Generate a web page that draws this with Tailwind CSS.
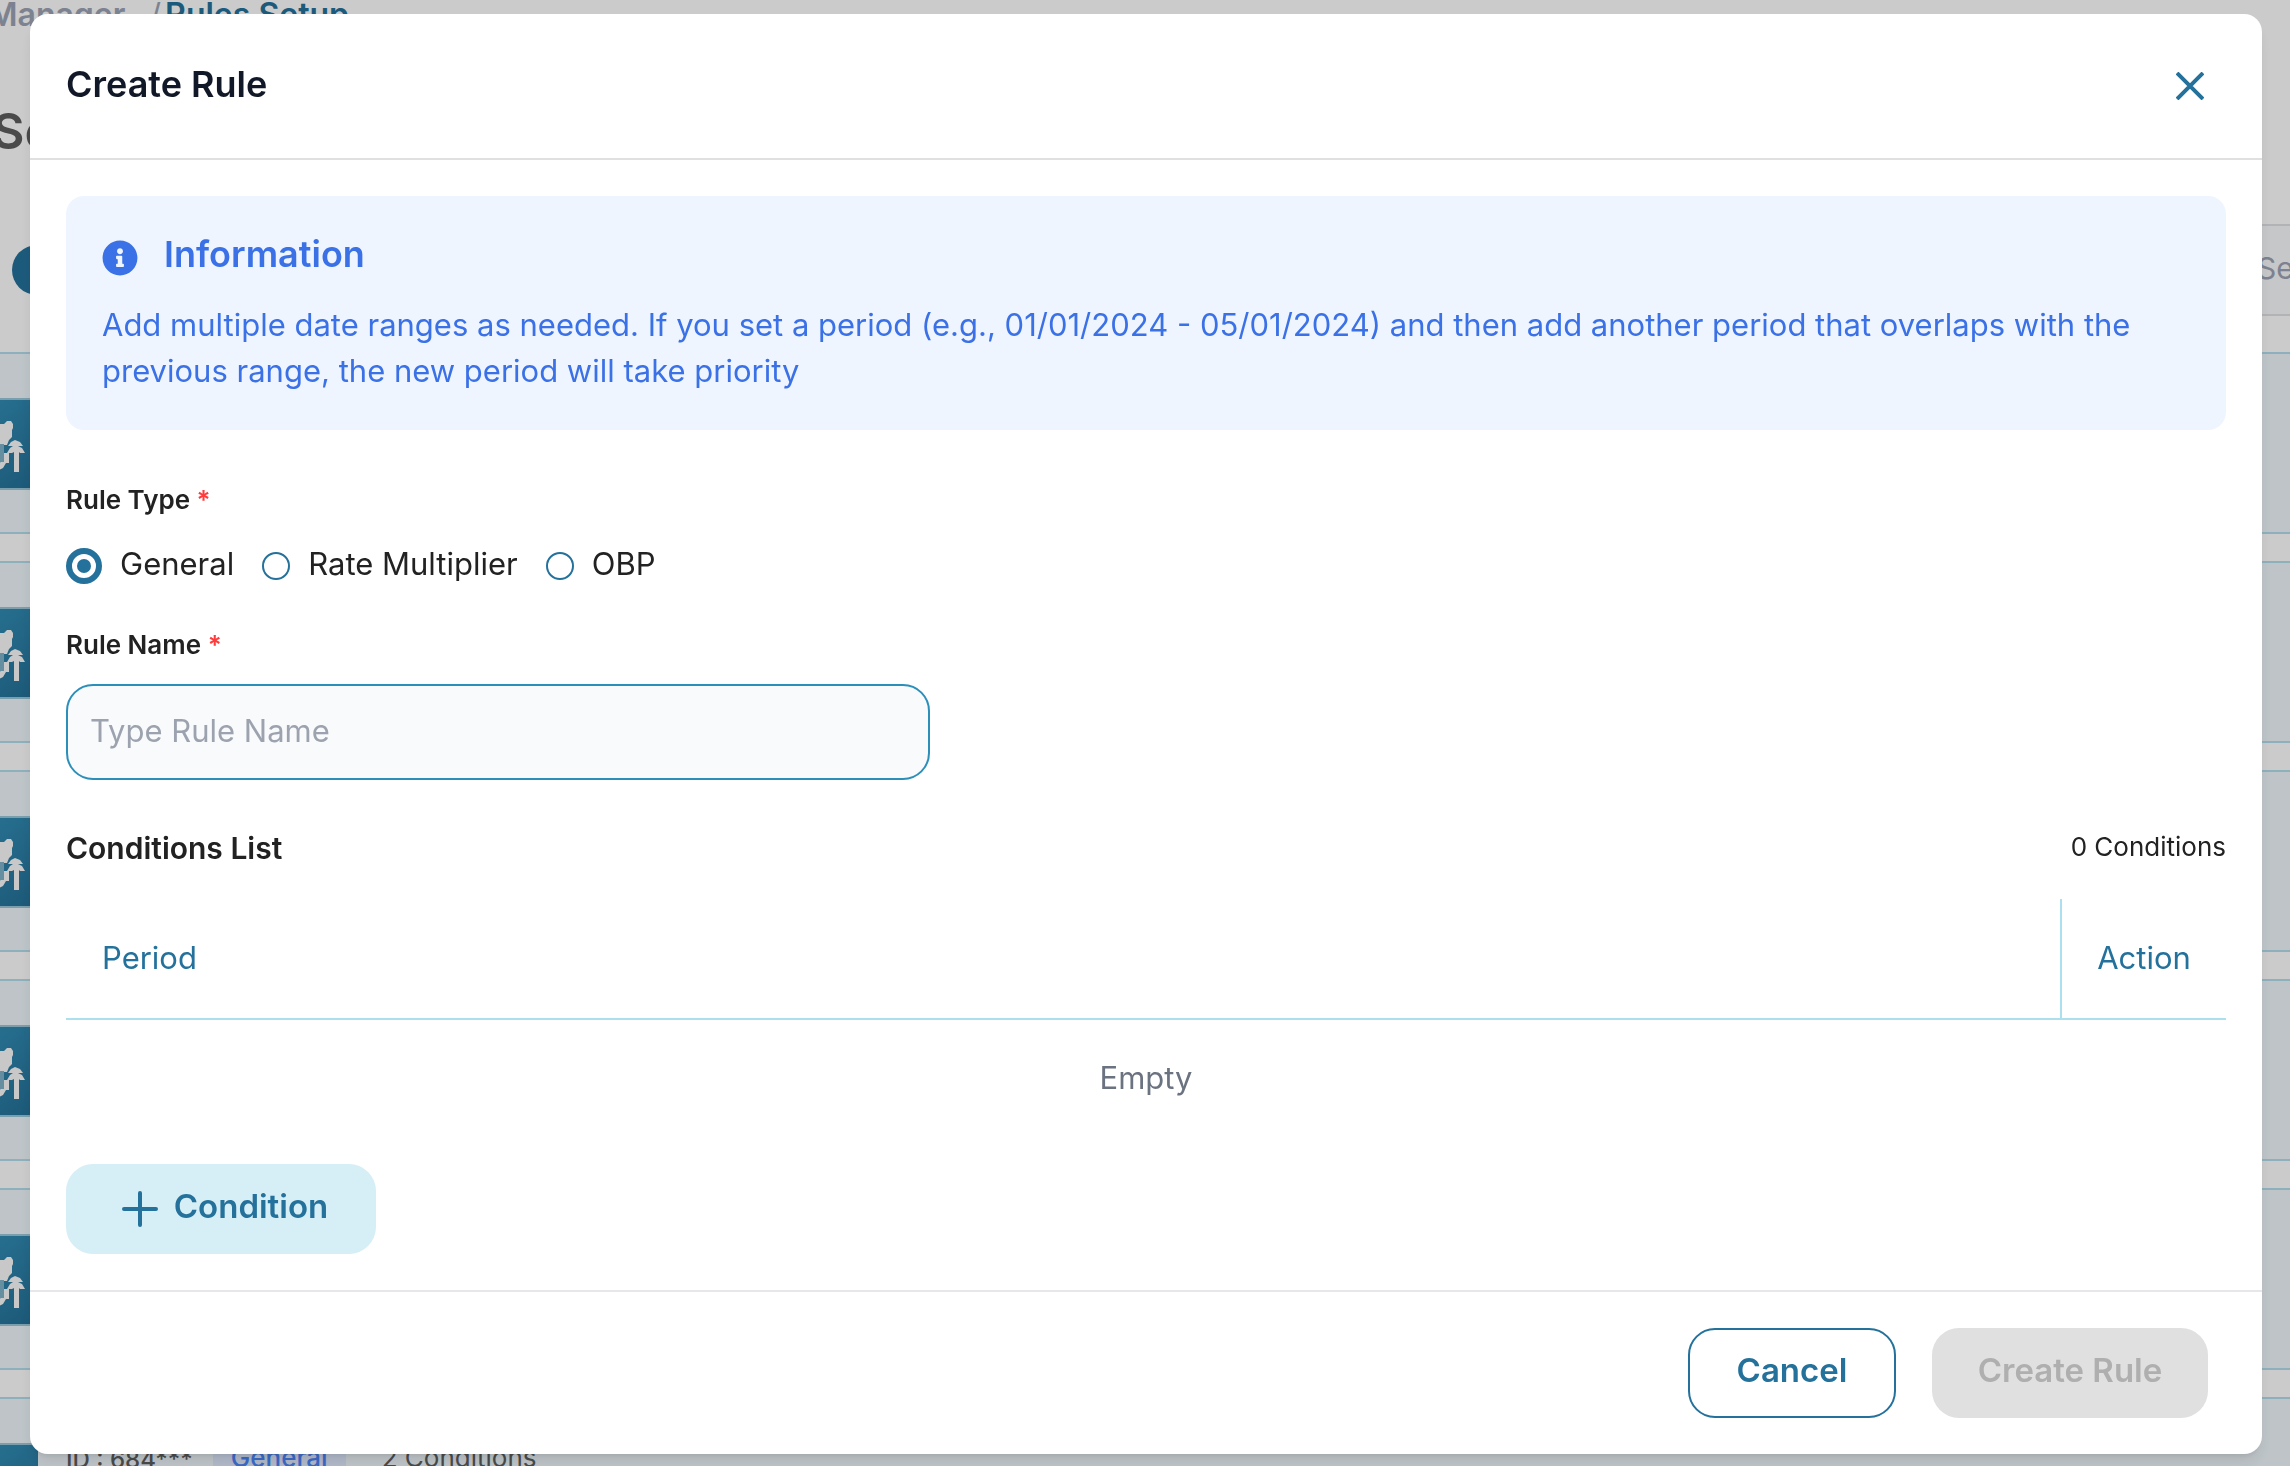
<!DOCTYPE html>
<html lang="en">

<head>
    <meta charset="UTF-8">
    <meta name="viewport" content="width=device-width, initial-scale=1">
    <title>Rules Setup</title>
    <script src="https://cdn.jsdelivr.net/npm/@tailwindcss/browser@4"></script>
</head>

<body class="h-screen overflow-hidden bg-[#fefefe] font-['Inter',sans-serif] text-[#222]">

    <!-- Thumbnail used by every rule row -->
    <svg class="hidden">
        <symbol id="palm" viewBox="0 0 92 88">
            <path d="M40 24h18l3-3h4l2 3v4l-1 2v7l-3 3-2 5h-7l-8 4-6-6z" fill="#fafafa" />
            <path d="M54 44h4v20h-4z" fill="#7fb2c8" />
            <path d="M58 53h5v10h-3l-3 5-6 3H40v-5h10l5-4h3z" fill="#fafafa" />
            <path d="M62 46l3-4 4-2 5 2 3 4-5 0 4 2 3 5h-5l-1-1v20h-5V52l-2 1h-5l3-5 3-2z" fill="#fafafa" />
        </symbol>
    </svg>

    <!-- Page behind the dialog -->
    <main aria-hidden="true" class="-mr-20 -ml-20 h-screen overflow-hidden">
        <nav class="flex h-[30px] items-center gap-6 pl-[68px] text-[32px] leading-[30px] font-semibold">
            <a href="#" class="text-[#9ca3b4]">Manager</a>
            <span class="flex gap-1"><span class="font-normal text-[#9ca3b4]">/</span><a href="#" class="text-[#24719b]">Rules Setup</a></span>
        </nav>
        <h1 class="mt-[68px] pl-[72px] text-[50px] leading-[66px] font-semibold text-[#5d5d5d]">Setup</h1>
        <div class="mt-[60px] flex h-[92px] items-center justify-between pl-[92px]">
            <span class="size-[50px] rounded-full bg-[#24719b]"></span>
            <div class="flex h-full w-[130px] items-center border-y-2 border-[#dfe0e4] bg-[#f8f9fb] pb-1 pl-[17px] text-[30px] text-[#9ca3b4]">Search</div>
        </div>

        <div class="mt-9 flex flex-col gap-[27px]">
            <div class="flex h-[182px] shrink-0 items-start border-2 border-[#b2dced] bg-[#eef6fa] pt-11 pl-6">
                <svg class="h-[92px] w-[92px] border-y-2 border-[#9ac6d8] bg-linear-to-br from-[#3797bf] to-[#236e95]"><use href="#palm" /></svg>
            </div>
            <div class="flex h-[182px] shrink-0 items-start border-2 border-[#b2dced] bg-[#eef6fa] pt-11 pl-6">
                <svg class="h-[92px] w-[92px] border-y-2 border-[#9ac6d8] bg-linear-to-br from-[#3797bf] to-[#236e95]"><use href="#palm" /></svg>
            </div>
            <div class="flex h-[182px] shrink-0 items-start border-2 border-[#b2dced] bg-[#eef6fa] pt-11 pl-6">
                <svg class="h-[92px] w-[92px] border-y-2 border-[#9ac6d8] bg-linear-to-br from-[#3797bf] to-[#236e95]"><use href="#palm" /></svg>
            </div>
            <div class="flex h-[182px] shrink-0 items-start border-2 border-[#b2dced] bg-[#eef6fa] pt-11 pl-6">
                <svg class="h-[92px] w-[92px] border-y-2 border-[#9ac6d8] bg-linear-to-br from-[#3797bf] to-[#236e95]"><use href="#palm" /></svg>
            </div>
            <div class="flex h-[182px] shrink-0 items-start border-2 border-[#b2dced] bg-[#eef6fa] pt-11 pl-6">
                <svg class="h-[92px] w-[92px] border-y-2 border-[#9ac6d8] bg-linear-to-br from-[#3797bf] to-[#236e95]"><use href="#palm" /></svg>
            </div>
            <div class="flex h-[182px] shrink-0 items-start gap-7 border-2 border-[#b2dced] bg-[#eef6fa] pt-10 pl-6">
                <svg class="mt-1 h-[92px] w-[92px] border-y-2 border-[#9ac6d8] bg-linear-to-br from-[#3797bf] to-[#236e95]"><use href="#palm" /></svg>
                <div class="flex items-center gap-5 text-[26px] leading-[34px] text-[#5d5d5d]">
                    <span class="pt-1 text-[24px] font-medium">ID : 684***</span>
                    <span class="bg-[#dfe9fe] px-[18px] font-medium text-[#4a85fa]">General</span>
                    <span class="pl-4">2 Conditions</span>
                </div>
            </div>
        </div>
    </main>

    <!-- Dialog -->
    <div class="fixed inset-0 bg-black/20 pt-3.5 pr-7 pb-3 pl-[30px]">
        <div role="dialog" aria-modal="true" aria-labelledby="dialog-title" class="flex min-h-full flex-col rounded-[18px] bg-white shadow-lg">

            <header class="flex items-center justify-between border-b-2 border-[#e0e0e0] p-9">
                <h2 id="dialog-title" class="pb-1 text-[36px] font-semibold text-[#111827]">Create Rule</h2>
                <button id="close-btn" type="button" aria-label="Close" class="flex size-[72px] items-center justify-center text-[#24719b]">
                    <svg class="size-7" viewBox="0 0 28 28" fill="none" stroke="currentColor" stroke-width="4">
                        <path d="M1 1l26 26M27 1L1 27" />
                    </svg>
                </button>
            </header>

            <form id="rule-form" class="flex flex-1 flex-col items-start p-9">
                <section class="w-full rounded-[18px] bg-[#eef5ff] p-9 text-[#3b71e6]">
                    <div class="mb-[18px] flex h-[52px] items-center gap-[26px]">
                        <svg class="size-9" viewBox="0 0 512 512" fill="currentColor">
                            <path d="M256 8C119.043 8 8 119.083 8 256c0 136.997 111.043 248 248 248s248-111.003 248-248C504 119.083 392.957 8 256 8zm0 110c23.196 0 42 18.804 42 42s-18.804 42-42 42-42-18.804-42-42 18.804-42 42-42zm56 254c0 6.627-5.373 12-12 12h-88c-6.627 0-12-5.373-12-12v-24c0-6.627 5.373-12 12-12h12v-64h-12c-6.627 0-12-5.373-12-12v-24c0-6.627 5.373-12 12-12h64c6.627 0 12 5.373 12 12v100h12c6.627 0 12 5.373 12 12v24z" />
                        </svg>
                        <h3 class="pb-2 text-[36px] font-semibold">Information</h3>
                    </div>
                    <p class="text-[31px] leading-[46px]">Add multiple date ranges as needed. If you set a period (e.g., 01/01/2024 - 05/01/2024) and then add another period that overlaps with the previous range, the new period will take priority</p>
                </section>

                <fieldset class="mt-[52px]">
                    <legend class="text-[26px] leading-9 font-semibold">Rule Type <span class="text-[#ff3b3b]">*</span></legend>
                    <div class="mt-[30px] flex h-9 items-center gap-7 text-[31px]">
                        <label class="flex items-center gap-[18px]"><input type="radio" name="rule-type" value="general" checked class="size-7 appearance-none rounded-full border-2 border-[#24719b] checked:size-9 checked:border-[6px] checked:bg-[#24719b] checked:bg-clip-content checked:p-[5px]"><span class="pb-1">General</span></label>
                        <label class="flex items-center gap-[18px]"><input type="radio" name="rule-type" value="multiplier" class="size-7 appearance-none rounded-full border-2 border-[#24719b] checked:size-9 checked:border-[6px] checked:bg-[#24719b] checked:bg-clip-content checked:p-[5px]"><span class="pb-1">Rate Multiplier</span></label>
                        <label class="flex items-center gap-[18px]"><input type="radio" name="rule-type" value="obp" class="size-7 appearance-none rounded-full border-2 border-[#24719b] checked:size-9 checked:border-[6px] checked:bg-[#24719b] checked:bg-clip-content checked:p-[5px]"><span class="pb-1">OBP</span></label>
                    </div>
                </fieldset>

                <label for="rule-name" class="mt-[43px] text-[26px] leading-9 font-semibold">Rule Name <span class="text-[#ff3b3b]">*</span></label>
                <input id="rule-name" type="text" placeholder="Type Rule Name" class="mt-[21px] h-24 w-2/5 rounded-[27px] border-2 border-[#2b8fba] bg-[#f9fafc] px-[22px] pb-1 text-[31px] placeholder:text-[#9ca3af]">

                <div class="mt-[47px] flex h-[42px] w-full items-center justify-between">
                    <h3 class="text-[30px] font-semibold">Conditions List</h3>
                    <span id="condition-count" class="pb-1 text-[26px]">0 Conditions</span>
                </div>

                <table class="mt-[30px] w-full border-collapse text-[31px]">
                    <thead>
                        <tr class="h-[120px] border-b-2 border-[#ace0ef] text-[#24719b]">
                            <th class="px-9 text-left font-normal">Period</th>
                            <th class="w-[165px] border-l-2 border-[#ace0ef] font-normal">Action</th>
                        </tr>
                    </thead>
                    <tbody>
                        <tr class="h-[118px]">
                            <td colspan="2" class="text-center text-[#6b7280]">Empty</td>
                        </tr>
                    </tbody>
                </table>

                <button type="button" class="mt-[27px] flex h-[90px] min-w-[310px] items-center justify-center gap-4 rounded-[27px] bg-[#d6eef5] pl-2 text-[33px] font-semibold text-[#24719b]">
                    <svg class="size-9" viewBox="0 0 36 36" fill="none" stroke="currentColor" stroke-width="4" stroke-linecap="round">
                        <path d="M18 2v32M2 18h32" />
                    </svg>
                    <span class="pb-1">Condition</span>
                </button>
            </form>

            <footer class="flex justify-end gap-9 border-t-2 border-[#e5e7eb] py-9 pr-[54px]">
                <button id="cancel-btn" type="button" class="h-[90px] min-w-[208px] rounded-[27px] border-2 border-[#24719b] pb-1 text-[33px] font-semibold text-[#24719b]">Cancel</button>
                <button type="submit" form="rule-form" disabled class="h-[90px] min-w-[276px] rounded-[27px] bg-[#e0e0e0] pb-1 text-[33px] font-semibold text-[#afafaf]">Create Rule</button>
            </footer>
        </div>
    </div>

</body>

</html>
